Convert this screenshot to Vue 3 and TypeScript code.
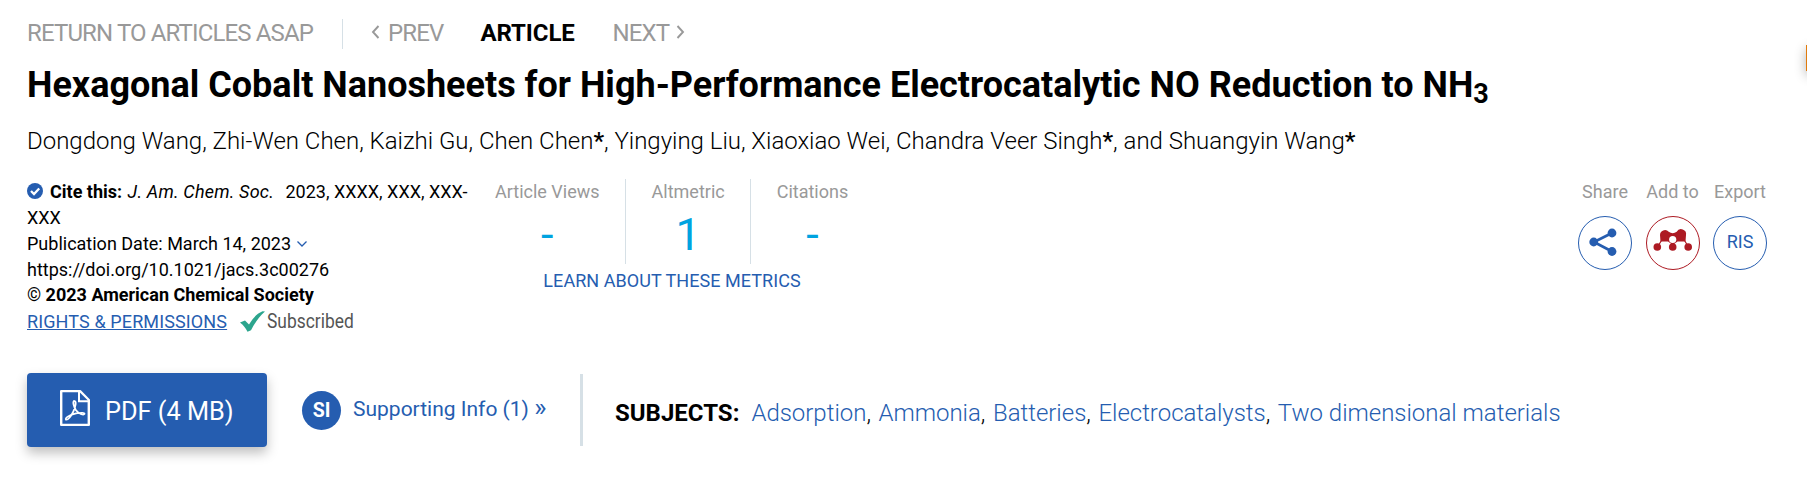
<script setup lang="ts">
interface Metric { label: string; value: string }

const metrics: Metric[] = [
  { label: 'Article Views', value: '-' },
  { label: 'Altmetric', value: '1' },
  { label: 'Citations', value: '-' },
]
const authors = [
  { name: 'Dongdong Wang', star: false },
  { name: 'Zhi-Wen Chen', star: false },
  { name: 'Kaizhi Gu', star: false },
  { name: 'Chen Chen', star: true },
  { name: 'Yingying Liu', star: false },
  { name: 'Xiaoxiao Wei', star: false },
  { name: 'Chandra Veer Singh', star: true },
  { name: 'Shuangyin Wang', star: true },
]
const subjects: string[] = ['Adsorption', 'Ammonia', 'Batteries', 'Electrocatalysts', 'Two dimensional materials']

function separator(i: number): string {
  if (i === authors.length - 1) return ''
  return i === authors.length - 2 ? ', and ' : ', '
}
</script>

<template>
  <main class="page">
    <nav class="crumbs">
      <a class="asap">RETURN TO ARTICLES ASAP</a>
      <a class="prev"><svg width="9" height="14" viewBox="0 0 9 14"><path d="M7.500 1 2 7l5.500 6" /></svg>PREV</a>
      <a class="current">ARTICLE</a>
      <a class="next">NEXT<svg width="9" height="14" viewBox="0 0 9 14"><path d="M1.500 1 7 7l-5.500 6" /></svg></a>
    </nav>

    <h1 class="title">Hexagonal Cobalt Nanosheets for High-Performance Electrocatalytic NO Reduction to NH<sub>3</sub></h1>

    <div class="authors"><template v-for="(a, i) in authors" :key="a.name">{{ a.name }}<b v-if="a.star">*</b>{{ separator(i) }}</template></div>

    <section class="info">
      <div class="cite">
        <div class="cite-this"><svg class="badge-check" width="16" height="16" viewBox="0 0 16 16"><circle cx="8" cy="8" r="8" fill="#255db0" /><path d="M4 8l3 3 5.200-5.500" fill="none" stroke="#fff" stroke-width="2.300" /></svg><b>Cite this:</b> <i>J. Am. Chem. Soc.</i><span class="year">2023, XXXX, XXX, XXX-</span></div>
        <div class="cite-this">XXX</div>
        <div class="pub">Publication Date: March 14, 2023<svg class="chev" width="12" height="8" viewBox="0 0 12 8"><path d="M1.500 1.500 6 6l4.500-4.500" fill="none" stroke="#255db0" stroke-width="1.300" /></svg></div>
        <div class="doi">https://doi.org/10.1021/jacs.3c00276</div>
        <div class="copy">© <b>2023 American Chemical Society</b></div>
        <div class="rights">
          <a>RIGHTS &amp; PERMISSIONS</a>
          <svg width="25" height="21" viewBox="0 0 25 21"><path d="M0 11.500 5 9.500 9 13.500C13 7 17 2.500 22.500.3L25 .5C19 5.500 15 12 11 19.300L7.500 20.700C5.500 17 3.500 14 0 11.500Z" fill="#2ca58d" /></svg>
          <span class="subscribed">Subscribed</span>
        </div>
      </div>

      <div class="metrics">
        <div class="metric-row">
          <div v-for="m in metrics" :key="m.label" class="metric">
            <span class="label">{{ m.label }}</span>
            <span class="value">{{ m.value }}</span>
          </div>
        </div>
        <a class="learn">LEARN ABOUT THESE METRICS</a>
      </div>

      <div class="actions">
        <div class="action">
          <span class="label">Share</span>
          <a class="round"><svg width="54" height="54" viewBox="0 0 54 54"><path d="M34 17 16 26 34 35.500" fill="none" stroke="#255db0" stroke-width="2.700" /><g fill="#255db0"><circle cx="34" cy="17" r="4.400" /><circle cx="15.700" cy="26" r="4.400" /><circle cx="34" cy="35.500" r="4.400" /></g></svg></a>
        </div>
        <div class="action">
          <span class="label">Add to</span>
          <a class="round red"><svg width="54" height="54" viewBox="0 0 54 54"><path d="M17 22 11.500 31M37 22 42.500 31" fill="none" stroke="#ad1a23" stroke-width="1.200" /><path d="M14 19a5 5 0 0 1 8.700-3.300Q26.700 18.600 30.700 15.700A5 5 0 0 1 40 19L39.500 25.500H31.500L26.700 29 22 25.500H14.500Z" fill="#ad1a23" /><circle cx="11.300" cy="31" r="3.800" fill="#ad1a23" /><circle cx="26.700" cy="31" r="3.800" fill="#ad1a23" /><circle cx="42.200" cy="31" r="3.800" fill="#ad1a23" /><circle cx="26.700" cy="23.500" r="3.600" fill="#fff" /></svg></a>
        </div>
        <div class="action">
          <span class="label">Export</span>
          <a class="round ris">RIS</a>
        </div>
      </div>
    </section>

    <section class="bottom">
      <a class="pdf">
        <svg width="30" height="36" viewBox="0 0 30 40" preserveAspectRatio="none"><path d="M1.200 1.200H20L28.800 11V38.800H1.200Z" fill="none" stroke="#fff" stroke-width="2.400" stroke-linejoin="round" /><path d="M19 1.500V12.500H28.500" fill="none" stroke="#fff" stroke-width="2" /><path d="M14 12C17 12 15.500 19 13.300 24 11 29 8 33.500 6 33 4.500 31 10 27.500 16 26 21 24.800 25 25 24.500 26.600 23.500 28.500 18.500 26 16 22.500 13.800 19 12.500 13 14 12Z" fill="none" stroke="#fff" stroke-width="1.800" /></svg>
        <span>PDF (4 MB)</span>
      </a>
      <span class="si">SI</span>
      <a class="support">Supporting Info (1) <span class="raquo">»</span></a>
      <div class="subjects">
        <b>SUBJECTS:</b><span class="list"><template v-for="(s, i) in subjects" :key="s"><a>{{ s }}</a><span v-if="i < subjects.length - 1" class="comma">,</span></template></span>
      </div>
    </section>
    <span class="tab"></span>
  </main>
</template>

<style>
body { margin: 0; background: #fff; }
</style>

<style scoped>
.page {
  position: relative;
  box-sizing: border-box;
  width: 1807px;
  height: 479px;
  padding: 19px 40px 0 27px;
  overflow: hidden;
  font-family: Roboto, "Liberation Sans", sans-serif;
  font-size: 18px;
  color: #000;
  white-space: nowrap;
}
b { font-weight: 700; }
.crumbs { display: flex; height: 30px; font-size: 24px; line-height: 28px; letter-spacing: -.86px; color: #999; }
.asap { width: 315px; border-right: 1px solid #d6e0e6; }
.crumbs svg { fill: none; stroke: #999; stroke-width: 1.900; vertical-align: 2px; }
.prev { margin-left: 28px; width: 109.500px; }
.prev svg { margin-right: 8px; }
.current { width: 132px; color: #000; font-weight: 700; letter-spacing: -.1px; }
.next svg { margin-left: 7px; }
.title { margin: 15px 0 0; height: 43px; font-size: 36px; line-height: 43px; font-weight: 700; }
.title sub { font-size: 27px; line-height: 0; vertical-align: -6px; }
.authors { margin-top: 18px; height: 32px; line-height: 32px; font-size: 24px; font-weight: 300; letter-spacing: -.018px; }
.authors b { font-weight: 500; }
.info { display: flex; height: 194px; margin-top: 22px; }
.cite { width: 441px; line-height: 25.700px; }
.cite-this { height: 26px; line-height: 26px; }
.cite-this i { margin-left: 1px; letter-spacing: .2px; }
.badge-check { margin-right: 7px; vertical-align: -1px; }
.year { margin-left: 11.500px; }
.pub, .doi { height: 25.500px; line-height: 25.200px; }
.chev { margin-left: 5px; vertical-align: 2px; }
.copy { height: 26px; line-height: 26px; }
.rights { display: flex; align-items: center; height: 27px; }
.rights a { color: #255db0; text-decoration: underline; letter-spacing: .12px; }
.rights svg { margin: 0 2px 0 13px; }
.subscribed { color: #555; font-size: 20px; transform: scaleX(.87); transform-origin: left; }
.metrics { width: 408px; text-align: center; }
.metric-row { display: flex; height: 85px; }
.metric { padding: 0 25.500px; display: flex; flex-direction: column; }
.metric + .metric { border-left: 1px solid #d6e0e6; }
.metric:first-child { padding-left: 27px; }
.label { color: #999; line-height: 26px; }
.value { color: #00a3e0; font-size: 45px; line-height: 60px; }
.learn { color: #255db0; line-height: 34px; letter-spacing: .05px; }
.actions { display: flex; margin-left: auto; gap: 13.500px; }
.action { width: 54px; display: flex; flex-direction: column; align-items: center; }
.round { box-sizing: border-box; width: 54px; height: 54px; margin-top: 11px; border: 1px solid #255db0; border-radius: 50%; color: #255db0; text-align: center; line-height: 50px; }
.round svg { display: block; margin: -1px; }
.red { border-color: #ad1a23; }
.bottom { display: flex; height: 74px; }
.pdf { box-sizing: border-box; display: flex; align-items: center; width: 240px; height: 74px; padding-left: 33px; border-radius: 4px; background: #255db0; color: #fff; font-size: 25.300px; box-shadow: 0 6px 12px rgba(0, 0, 0, .25); }
.pdf svg { margin: -4px 15px 0 0; }
.pdf span { margin-top: 2px; }
.si { width: 39px; height: 39px; margin: 18px 12px 0 35px; border-radius: 50%; background: #255db0; color: #fff; font-size: 19.500px; line-height: 40px; font-weight: 700; text-align: center; }
.support { width: 227px; line-height: 72px; font-size: 21px; color: #255db0; }
.raquo { font-size: 26px; line-height: 0; }
.subjects { height: 72px; margin-top: 1px; padding-left: 32px; border-left: 3px solid #d6e0e6; line-height: 79px; font-size: 24px; }
.list { margin-left: 12px; font-weight: 300; letter-spacing: -.015px; }
.list a { color: #255db0; }
.comma { margin-right: 7.500px; }
.tab { position: absolute; left: 1806px; top: 45px; width: 26px; height: 26px; background: #e07a0c; box-shadow: 0 4px 12px rgba(0, 0, 0, .3); }
</style>
